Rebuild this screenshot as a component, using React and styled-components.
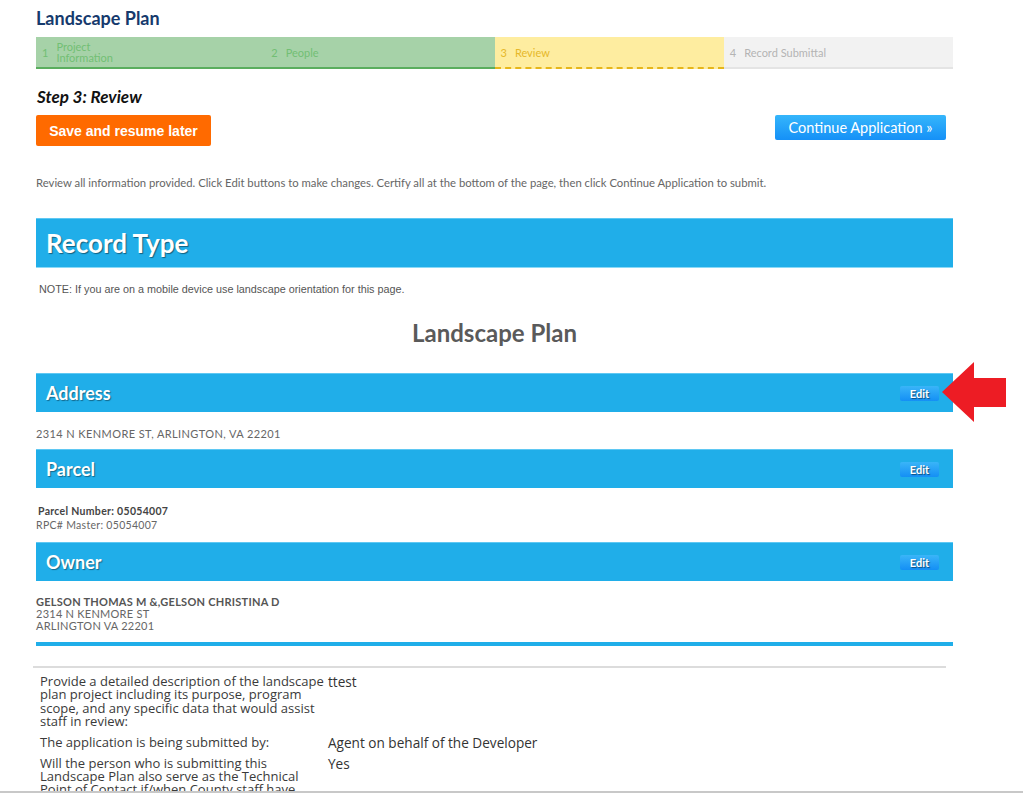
import React from 'react';
import styled, { createGlobalStyle } from 'styled-components';

const GlobalStyle = createGlobalStyle`
  body {
    margin: 0;
    background: #fff;
    font-family: Lato, "Open Sans", sans-serif;
    color: #555;
  }
`;

const steps = [
  { num: 1, label: 'Project Information', state: 'done', wrap: true },
  { num: 2, label: 'People', state: 'done' },
  { num: 3, label: 'Review', state: 'current' },
  { num: 4, label: 'Record Submittal', state: 'todo' },
];

const details = [
  {
    q: 'Provide a detailed description of the landscape plan project including its purpose, program scope, and any specific data that would assist staff in review:',
    a: 'ttest',
  },
  { q: 'The application is being submitted by:', a: 'Agent on behalf of the Developer' },
  {
    q: 'Will the person who is submitting this Landscape Plan also serve as the Technical Point of Contact if/when County staff have questions?',
    a: 'Yes',
  },
];

export default function App() {
  return (
    <>
      <GlobalStyle />
      <Page>
        <Title>Landscape Plan</Title>
        <StepBar>
          {steps.map((s) => (
            <Step key={s.num} state={s.state}>
              <StepNum>{s.num}</StepNum>
              <StepLabel wrap={s.wrap ? 1 : 0}>{s.label}</StepLabel>
            </Step>
          ))}
        </StepBar>

        <StepHeading>Step 3: Review</StepHeading>
        <ButtonRow>
          <SaveButton>Save and resume later</SaveButton>
          <ContinueButton>Continue Application »</ContinueButton>
        </ButtonRow>
        <Intro>
          Review all information provided. Click Edit buttons to make changes. Certify all at the bottom of the page, then click Continue Application to submit.
        </Intro>

        <RecordBar>Record Type</RecordBar>
        <Note>NOTE: If you are on a mobile device use landscape orientation for this page.</Note>
        <RecordName>Landscape Plan</RecordName>

        <SectionBar>
          <SectionTitle>Address</SectionTitle>
          <EditButton>Edit</EditButton>
          <Arrow viewBox="0 0 64 60" width="64" height="60">
            <polygon points="0,30 32,0 32,16 64,16 64,45 32,45 32,60" fill="#ed1c24" />
          </Arrow>
        </SectionBar>
        <AddressText>2314 N KENMORE ST, ARLINGTON, VA 22201</AddressText>

        <SectionBar>
          <SectionTitle>Parcel</SectionTitle>
          <EditButton>Edit</EditButton>
        </SectionBar>
        <ParcelBlock>
          <ParcelStrong>Parcel Number: 05054007</ParcelStrong>
          <ParcelLine>RPC# Master: 05054007</ParcelLine>
        </ParcelBlock>

        <SectionBar>
          <SectionTitle>Owner</SectionTitle>
          <EditButton>Edit</EditButton>
        </SectionBar>
        <OwnerBlock>
          <OwnerName>GELSON THOMAS M &amp;,GELSON CHRISTINA D</OwnerName>
          <OwnerLine>2314 N KENMORE ST</OwnerLine>
          <OwnerLine>ARLINGTON VA 22201</OwnerLine>
        </OwnerBlock>
        <BlueRule />
        <GrayRule />

        <DetailTable>
          {details.map((d) => (
            <React.Fragment key={d.q}>
              <Question>{d.q}</Question>
              <Answer>{d.a}</Answer>
            </React.Fragment>
          ))}
        </DetailTable>
      </Page>
      <WindowEdge />
    </>
  );
}

const Page = styled.div`
  width: 917px;
  padding: 7px 0 0 36px;
`;

const Title = styled.h1`
  margin: 0;
  font-size: 18px;
  line-height: 22px;
  font-weight: 700;
  color: #163a6d;
`;

const StepBar = styled.div`
  display: grid;
  grid-template-columns: repeat(4, 1fr);
  margin-top: 8px;
`;

const stepColors = {
  done: { bg: '#a6d2a8', border: '2px solid #5aae5e', text: '#72bf74' },
  current: { bg: '#feeda0', border: '2px dashed #e6b61a', text: '#e6b82a' },
  todo: { bg: '#f2f2f2', border: '2px solid #e4e4e4', text: '#b4b4b4' },
};

const Step = styled.div`
  display: flex;
  align-items: center;
  height: 30px;
  padding-left: 6px;
  background: ${({ state }) => stepColors[state].bg};
  border-bottom: ${({ state }) => stepColors[state].border};
  color: ${({ state }) => stepColors[state].text};
  font-size: 11px;
`;

const StepNum = styled.span`
  margin-right: 8px;
`;

const StepLabel = styled.span`
  line-height: 11px;
  width: ${({ wrap }) => (wrap ? '60px' : 'auto')};
`;

const StepHeading = styled.h2`
  margin: 18px 0 0 1px;
  font-size: 17px;
  line-height: 20px;
  font-weight: 700;
  font-style: italic;
  color: #111;
`;

const ButtonRow = styled.div`
  display: flex;
  justify-content: space-between;
  align-items: flex-start;
  margin-top: 8px;
  padding-right: 7px;
`;

const SaveButton = styled.button`
  height: 31px;
  width: 175px;
  border: none;
  border-radius: 2px;
  background: #ff6a00;
  color: #fff;
  font-family: "Liberation Sans", Arial, sans-serif;
  font-size: 14px;
  font-weight: 700;
  padding: 0;
`;

const ContinueButton = styled.button`
  height: 25px;
  width: 171px;
  border: none;
  border-radius: 2px;
  background: linear-gradient(#35b6fb, #1590f7);
  color: #fff;
  font-family: Lato, sans-serif;
  font-size: 14.5px;
  padding: 0;
`;

const Intro = styled.p`
  margin: 30px 0 0;
  font-size: 11.3px;
  line-height: 14px;
  color: #666;
`;

const RecordBar = styled.div`
  margin-top: 28px;
  height: 48px;
  display: flex;
  align-items: center;
  padding-left: 10px;
  background: #20aee9;
  border-top: 1px solid #5fc8f3;
  border-bottom: 1px solid #8ad9f7;
  color: #fff;
  font-size: 26px;
  font-weight: 700;
  text-shadow: 1px 1px 1px rgba(0, 0, 0, 0.45);
`;

const Note = styled.p`
  margin: 14px 0 0 3px;
  font-family: "Liberation Sans", Arial, sans-serif;
  font-size: 10.8px;
  line-height: 14px;
  color: #555;
`;

const RecordName = styled.h2`
  margin: 24px 0 27px;
  text-align: center;
  font-size: 24px;
  line-height: 26px;
  font-weight: 700;
  color: #5a5a5a;
`;

const SectionBar = styled.div`
  position: relative;
  display: flex;
  align-items: center;
  justify-content: space-between;
  height: 38px;
  padding: 0 14px 0 10px;
  background: #20aee9;
  border-top: 1px solid #5fc8f3;
`;

const SectionTitle = styled.span`
  color: #fff;
  font-size: 18px;
  font-weight: 700;
  text-shadow: 1px 1px 1px rgba(0, 0, 0, 0.4);
`;

const EditButton = styled.button`
  width: 39px;
  height: 15px;
  border: none;
  border-radius: 2px;
  padding: 0;
  background: linear-gradient(#3ab5f8, #148ff5);
  color: #fff;
  font-family: Lato, sans-serif;
  font-size: 11px;
  font-weight: 700;
  line-height: 15px;
  text-shadow: 1px 1px 1px rgba(0, 0, 0, 0.5);
`;

const Arrow = styled.svg`
  position: absolute;
  right: -53px;
  top: -12px;
`;

const AddressText = styled.div`
  margin: 15px 0 8px;
  font-size: 11px;
  letter-spacing: 0.4px;
  line-height: 14px;
  color: #666;
`;

const ParcelBlock = styled.div`
  margin: 16px 0 10px 2px;
  font-size: 10.5px;
  line-height: 14px;
  letter-spacing: 0.3px;
`;

const ParcelStrong = styled.div`
  font-weight: 700;
  color: #444;
`;

const ParcelLine = styled.div`
  margin-left: -2px;
  color: #666;
`;

const OwnerBlock = styled.div`
  margin-top: 15px;
  font-size: 11px;
  line-height: 12px;
  letter-spacing: 0.25px;
  color: #666;
`;

const OwnerName = styled.div`
  font-weight: 700;
  color: #555;
`;

const OwnerLine = styled.div``;

const BlueRule = styled.div`
  margin-top: 10px;
  height: 4px;
  background: #20aee9;
`;

const GrayRule = styled.div`
  margin: 20px 7px 0 -3px;
  height: 2px;
  background: #dcdcdc;
`;

const DetailTable = styled.div`
  display: grid;
  grid-template-columns: 288px 1fr;
  row-gap: 7px;
  margin: 7px 0 0 4px;
  font-family: "Open Sans", "Noto Sans", sans-serif;
  color: #333;
`;

const Question = styled.div`
  font-size: 13px;
  line-height: 13.4px;
  color: #3a3a3a;
`;

const Answer = styled.div`
  font-size: 13.6px;
  line-height: 14px;
`;

const WindowEdge = styled.div`
  position: fixed;
  left: 0;
  right: 0;
  bottom: 0;
  height: 2px;
  background: #c8c8c8;
`;
